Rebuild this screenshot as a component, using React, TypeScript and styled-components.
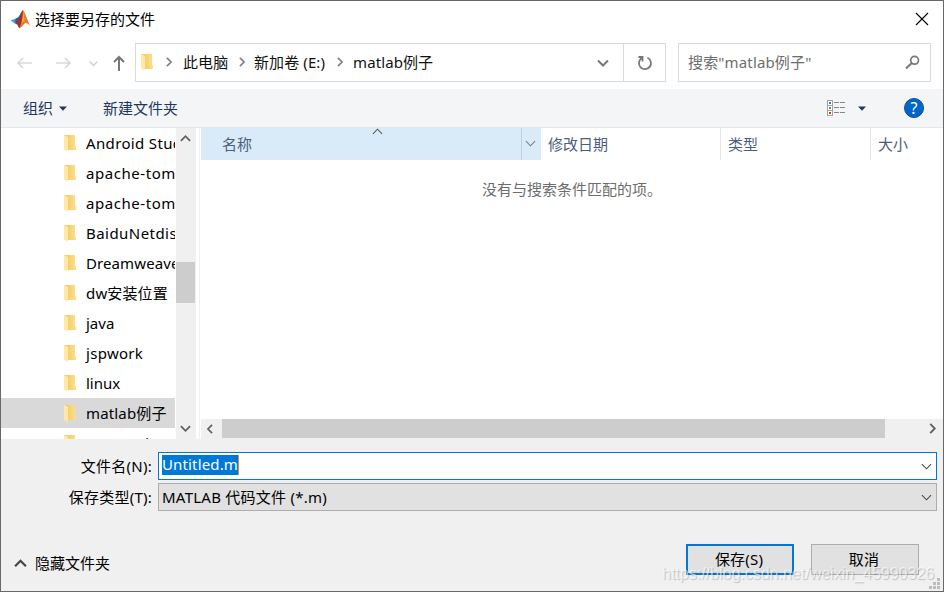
import React from 'react';
import styled, { createGlobalStyle } from 'styled-components';

const Global = createGlobalStyle`
  *, *::before, *::after { box-sizing: border-box; }
  html, body { margin: 0; padding: 0; }
  body {
    font-family: "Noto Sans", "Noto Sans CJK SC", sans-serif;
    font-size: 15px;
    line-height: 20px;
    color: #000;
    white-space: nowrap;
    overflow: hidden;
  }
  svg { display: block; flex: none; }
  button { font: inherit; color: inherit; border-radius: 0; padding: 0; margin: 0; background: none; border: 0; }
`;

const Dialog = styled.div`
  position: relative;
  width: 944px;
  height: 592px;
  border: 1px solid #68676a;
  background: #f0f0f0;
  display: flex;
  flex-direction: column;
  overflow: hidden;
`;

const TitleBar = styled.header`
  height: 36px;
  flex: none;
  background: #fff;
  display: flex;
  align-items: center;
  padding: 0 14px 0 9px;
`;

const Title = styled.span`
  flex: 1;
  margin-left: 4px;
`;

const NavBar = styled.nav`
  height: 52px;
  flex: none;
  background: #fff;
  display: flex;
  padding: 6px 12px 7px 0;
`;

const NavButtons = styled.div`
  width: 134px;
  display: flex;
  align-items: center;
  padding-left: 16px;
  padding-top: 1px;
`;

const NavIcon = styled.button<{ $gap: number }>`
  margin-right: ${p => p.$gap}px;
`;

const AddressBox = styled.div`
  width: 531px;
  height: 39px;
  border: 1px solid #d9d9d9;
  display: flex;
  align-items: center;
  padding: 0 0 1px 4px;
`;

const Crumb = styled.span<{ $width: number }>`
  width: ${p => p.$width}px;
  letter-spacing: 0.1px;
  color: #111;
`;

const CrumbArrow = styled.span<{ $width?: number }>`
  width: ${p => p.$width ?? 26}px;
  display: flex;
  justify-content: center;
`;

const AddressDrop = styled.div`
  flex: 1;
  display: flex;
  justify-content: flex-end;
  padding-right: 14px;
  padding-top: 1px;
`;

const Refresh = styled.button`
  width: 42px;
  height: 37px;
  margin-bottom: -1px;
  border-left: 1px solid #d9d9d9;
  display: flex;
  align-items: center;
  justify-content: center;
`;

const SearchBox = styled.div`
  width: 253px;
  height: 39px;
  margin-left: 12px;
  border: 1px solid #d9d9d9;
  display: flex;
  align-items: center;
  justify-content: space-between;
  padding: 0 10px 1px 9px;
  letter-spacing: 0.15px;
  color: #6d6d6d;
`;

const Toolbar = styled.div`
  height: 39px;
  flex: none;
  background: #f4f5f7;
  border-bottom: 1px solid #e6e7e8;
  display: flex;
  align-items: center;
  padding: 0 19px 0 22px;
  color: #1e395b;
`;

const ToolButton = styled.button<{ $gap: number }>`
  display: flex;
  align-items: center;
  gap: 6px;
  margin-right: ${p => p.$gap}px;
`;

const Spacer = styled.div`
  flex: 1;
`;

const HelpBadge = styled.span`
  width: 20px;
  height: 20px;
  border-radius: 50%;
  background: #0067c9;
  border: 1px solid #0b4f92;
  color: #fff;
  font-size: 16px;
  line-height: 18px;
  text-align: center;
`;

const Body = styled.main`
  height: 311px;
  flex: none;
  display: flex;
  background: #fff;
`;

const Tree = styled.div`
  width: 175px;
  overflow: hidden;
  padding-right: 1px;
`;

const TreeRow = styled.div<{ $selected?: boolean; $spacing: number }>`
  height: 30px;
  width: 174px;
  display: flex;
  align-items: center;
  gap: 9px;
  padding-left: 62px;
  overflow: hidden;
  letter-spacing: ${p => p.$spacing}px;
  background: ${p => (p.$selected ? '#d9d9d9' : 'transparent')};
`;

const VScroll = styled.div`
  width: 20px;
  background: #f0f0f0;
  display: flex;
  flex-direction: column;
  align-items: center;
  justify-content: space-between;
  padding: 5px 1px 5px 0;
`;

const VThumb = styled.div`
  width: 19px;
  height: 41px;
  margin-top: -2px;
  flex: none;
  background: #cdcdcd;
`;

const Divider = styled.div`
  width: 5px;
  border-left: 3px solid #fff;
  border-right: 1px solid #fff;
  background: #f0f0f0;
`;

const FileArea = styled.section`
  flex: 1;
  display: flex;
  flex-direction: column;
`;

const Columns = styled.div`
  height: 32px;
  display: flex;
  color: #4c607a;
`;

const NameColumn = styled.div`
  position: relative;
  width: 340px;
  display: flex;
  align-items: center;
  padding-left: 21px;
  background: #d9ebf9;
`;

const SortMark = styled.span`
  position: absolute;
  left: 171px;
  top: -2px;
`;

const NameDrop = styled.div`
  position: absolute;
  right: 0;
  top: 0;
  width: 20px;
  height: 32px;
  border-left: 1px solid #bdd0df;
  display: flex;
  align-items: center;
  justify-content: center;
  padding: 0 2px 1px 0;
`;

const Column = styled.div<{ $width: number }>`
  width: ${p => p.$width}px;
  padding-left: 7px;
  display: flex;
  align-items: center;
  border-right: 1px solid #e5e5e5;
  &:last-child { border-right: 0; }
`;

const EmptyText = styled.p`
  flex: 1;
  margin: 0;
  padding: 19px 0 0 281px;
  color: #6d6d6d;
`;

const HScroll = styled.div`
  height: 20px;
  background: #f0f0f0;
  display: flex;
  align-items: center;
  padding: 0 5px 1px 4px;
`;

const HThumb = styled.div`
  width: 663px;
  height: 19px;
  margin-left: 7px;
  margin-right: auto;
  background: #cdcdcd;
`;

const Fields = styled.div`
  padding: 13px 6px 0 0;
  display: flex;
  flex-direction: column;
  gap: 3px;
`;

const Field = styled.label`
  display: flex;
  align-items: center;
  height: 28px;
  letter-spacing: 0.25px;
`;

const FieldLabel = styled.span`
  width: 151px;
  text-align: right;
  margin-right: 6px;
`;

const Combo = styled.div<{ $active?: boolean }>`
  flex: 1;
  height: 28px;
  border: 1px solid ${p => (p.$active ? '#0078d7' : '#adadad')};
  background: ${p => (p.$active ? '#fff' : '#e1e1e1')};
  display: flex;
  align-items: center;
  justify-content: space-between;
  padding: 0 4px 0 3px;
`;

const Selection = styled.span`
  background: #0078d7;
  color: #fff;
  height: 20px;
  line-height: 19px;
  margin-bottom: 2px;
  letter-spacing: 0.15px;
  border-right: 1px solid #d98a3a;
`;

const Footer = styled.footer`
  display: flex;
  align-items: center;
  padding: 0 24px 0 13px;
  margin-top: 33px;
`;

const HideFolders = styled.button`
  display: flex;
  align-items: center;
  gap: 8px;
  margin-top: 7px;
`;

const PushButton = styled.button<{ $primary?: boolean }>`
  width: 108px;
  height: 31px;
  margin-left: 17px;
  padding: 0 2px 2px 0;
  background: #e1e1e1;
  border: ${p => (p.$primary ? '2px solid #0078d7' : '1px solid #adadad')};
  line-height: 20px;
  letter-spacing: 0.2px;
`;

const Watermark = styled.div`
  position: absolute;
  left: 661px;
  top: 562px;
  font: 16px/22px "Liberation Sans", sans-serif;
  color: rgba(255, 255, 255, 0.62);
  text-shadow: 1px 1px 1px rgba(0, 0, 0, 0.2);
`;

const Grip = styled.div`
  position: absolute;
  right: 3px;
  bottom: 2px;
`;

type ChevronProps = { dir?: 'up' | 'down' | 'left' | 'right'; size?: number; weight?: number; color?: string };

const turns = { down: 0, left: 90, up: 180, right: 270 };

const Chevron = ({ dir = 'down', size = 11, weight = 2, color = '#606060' }: ChevronProps) => (
  <svg width={size} height={size} viewBox="0 0 12 12">
    <path d="M1 3.5 6 8.5 11 3.5" transform={`rotate(${turns[dir]} 6 6)`} fill="none" stroke={color} strokeWidth={weight} />
  </svg>
);

const Folder = () => (
  <svg width="14" height="18" viewBox="0 0 14 18">
    <defs>
      <linearGradient id="folder-back" x1="0" x2="1">
        <stop offset="0.25" stopColor="#f2cd6b" />
        <stop offset="1" stopColor="#fce08a" />
      </linearGradient>
    </defs>
    <path d="M1 1H12V12L13 13V16H3Z" fill="url(#folder-back)" />
    <path d="M1 1 5 3V15.5L4 17.5 1 15.5Z" fill="#ffe9a6" />
  </svg>
);

const Arrow = ({ flip, up }: { flip?: boolean; up?: boolean }) => (
  <svg width={up ? 12 : 15} height={up ? 16 : 12} viewBox={up ? '0 0 12 16' : '0 0 15 12'}>
    {up ? (
      <path d="M6 16V2M1 7 6 2 11 7" fill="none" stroke="#767676" strokeWidth="2" />
    ) : (
      <path d="M1 6H15M6 1 1 6 6 11" transform={flip ? 'translate(15 0) scale(-1 1)' : undefined} fill="none" stroke="#d9d9d9" strokeWidth="1.6" />
    )}
  </svg>
);

const Logo = () => (
  <svg width="21" height="20" viewBox="0 0 21 20">
    <path d="M0.5 11.5 7 9 9.5 11 5.5 15Z" fill="#4d9fce" />
    <path d="M6 9.5C9.5 8.5 10.5 3 13 1L10.5 12 6 15.5 5 12Z" fill="#315f92" />
    <path d="M13 1C11 4 10.5 9 5.5 14.5 8 14.5 8 19 9.5 19 13 17.5 13.5 14 15.5 14L13.5 6Z" fill="#a43420" />
    <path d="M13 1C15 3 17 11 20.5 17 18 14.5 16.5 13.5 15 14 12.5 14.7 12 18 9.5 19 12 14 12.5 8 13 1Z" fill="#ed7a2b" />
    <path d="M13 2C13.5 6 12.5 11 11.5 14L14.5 11Z" fill="#f8b552" />
  </svg>
);

const ViewIcon = () => (
  <svg width="19" height="17" viewBox="0 0 19 17" shapeRendering="crispEdges">
    <path d="M.5 .5H5.5V15.5H.5ZM.5 5.5H5.5M.5 10.5H5.5" fill="#fff" stroke="#a2a2a2" />
    <rect x="2" y="2" width="2" height="2" fill="#3d7fc4" />
    <rect x="2" y="7" width="2" height="2" fill="#80803b" />
    <rect x="2" y="12" width="2" height="2" fill="#d03a20" />
    <path d="M7 2.5H12M13 2.5H18M7 7.5H12M13 7.5H18M7 12.5H12M13 12.5H18" stroke="#858585" />
  </svg>
);

const Caret = () => (
  <svg width="8" height="5" viewBox="0 0 8 5"><path d="M0 .5H8L4 4.7Z" fill="#1e395b" /></svg>
);

const folders: { name: string; spacing: number }[] = [
  { name: 'Android Studio', spacing: 0.35 },
  { name: 'apache-tomcat-8', spacing: 0.55 },
  { name: 'apache-tomcat-9', spacing: 0.55 },
  { name: 'BaiduNetdisk', spacing: 0.45 },
  { name: 'Dreamweaver', spacing: 0.1 },
  { name: 'dw安装位置', spacing: 0.15 },
  { name: 'java', spacing: 0 },
  { name: 'jspwork', spacing: 0.3 },
  { name: 'linux', spacing: 0 },
  { name: 'matlab例子', spacing: 0.15 },
  { name: 'Notepad++', spacing: 0.3 },
];

const gripDots = [[8, 0], [4, 4], [8, 4], [0, 8], [4, 8], [8, 8]];

export default function App() {
  return (
    <>
      <Global />
      <Dialog>
        <TitleBar>
          <Logo />
          <Title>选择要另存的文件</Title>
          <svg width="14" height="14" viewBox="0 0 14 14">
            <path d="M1 1 13 13M13 1 1 13" stroke="#000" strokeWidth="1.1" />
          </svg>
        </TitleBar>
        <NavBar>
          <NavButtons>
            <NavIcon $gap={24}><Arrow /></NavIcon>
            <NavIcon $gap={18}><Arrow flip /></NavIcon>
            <NavIcon $gap={15}><Chevron size={9} color="#d4d4d4" /></NavIcon>
            <NavIcon $gap={0}><Arrow up /></NavIcon>
          </NavButtons>
          <AddressBox>
            <Folder />
            <CrumbArrow $width={29}><Chevron dir="right" size={10} color="#808080" /></CrumbArrow>
            <Crumb $width={46}>此电脑</Crumb>
            <CrumbArrow $width={25}><Chevron dir="right" size={10} color="#808080" /></CrumbArrow>
            <Crumb $width={73}>新加卷 (E:)</Crumb>
            <CrumbArrow><Chevron dir="right" size={10} color="#808080" /></CrumbArrow>
            <Crumb $width={82}>matlab例子</Crumb>
            <AddressDrop><Chevron size={12} color="#777" /></AddressDrop>
            <Refresh>
              <svg width="16" height="16" viewBox="0 0 16 16">
                <path d="M10.5 2.7A6 6 0 1 1 4.7 3.1M1.5 2H5.5V6.5" fill="none" stroke="#777" strokeWidth="1.8" />
              </svg>
            </Refresh>
          </AddressBox>
          <SearchBox>
            <span>搜索"matlab例子"</span>
            <svg width="15" height="15" viewBox="0 0 15 15">
              <circle cx="9.6" cy="5.3" r="3.9" fill="none" stroke="#777" strokeWidth="1.7" />
              <path d="M6.8 8 1 13.5" stroke="#777" strokeWidth="2" />
            </svg>
          </SearchBox>
        </NavBar>
        <Toolbar>
          <ToolButton $gap={36}>组织<Caret /></ToolButton>
          <ToolButton $gap={0}>新建文件夹</ToolButton>
          <Spacer />
          <ToolButton $gap={12}><ViewIcon /></ToolButton>
          <ToolButton $gap={38}><Caret /></ToolButton>
          <HelpBadge>?</HelpBadge>
        </Toolbar>
        <Body>
          <Tree>
            {folders.map(({ name, spacing }) => (
              <TreeRow key={name} $spacing={spacing} $selected={name === 'matlab例子'}>
                <Folder />
                <span>{name}</span>
              </TreeRow>
            ))}
          </Tree>
          <VScroll>
            <Chevron dir="up" size={11} />
            <VThumb />
            <Chevron size={11} />
          </VScroll>
          <Divider />
          <FileArea>
            <Columns>
              <NameColumn>
                名称
                <SortMark><Chevron dir="up" size={11} weight={1.1} color="#555" /></SortMark>
                <NameDrop><Chevron size={11} weight={1.1} color="#6d7c88" /></NameDrop>
              </NameColumn>
              <Column $width={180}>修改日期</Column>
              <Column $width={150}>类型</Column>
              <Column $width={70}>大小</Column>
            </Columns>
            <EmptyText>没有与搜索条件匹配的项。</EmptyText>
            <HScroll>
              <Chevron dir="left" size={10} />
              <HThumb />
              <Chevron dir="right" size={11} />
            </HScroll>
          </FileArea>
        </Body>
        <Fields>
          <Field>
            <FieldLabel>文件名(N):</FieldLabel>
            <Combo $active><Selection>Untitled.m</Selection><Chevron weight={1.1} color="#444" /></Combo>
          </Field>
          <Field>
            <FieldLabel>保存类型(T):</FieldLabel>
            <Combo><span>MATLAB 代码文件 (*.m)</span><Chevron weight={1.1} color="#444" /></Combo>
          </Field>
        </Fields>
        <Footer>
          <HideFolders><Chevron dir="up" size={13} color="#444" />隐藏文件夹</HideFolders>
          <Spacer />
          <PushButton $primary>保存(S)</PushButton>
          <PushButton>取消</PushButton>
        </Footer>
        <Watermark>https://blog.csdn.net/weixin_45990326</Watermark>
        <Grip>
          <svg width="11" height="11" viewBox="0 0 11 11">
            {gripDots.map(([x, y]) => <rect key={`${x}-${y}`} x={x} y={y} width="3" height="3" fill="#bcbcbc" />)}
          </svg>
        </Grip>
      </Dialog>
    </>
  );
}
